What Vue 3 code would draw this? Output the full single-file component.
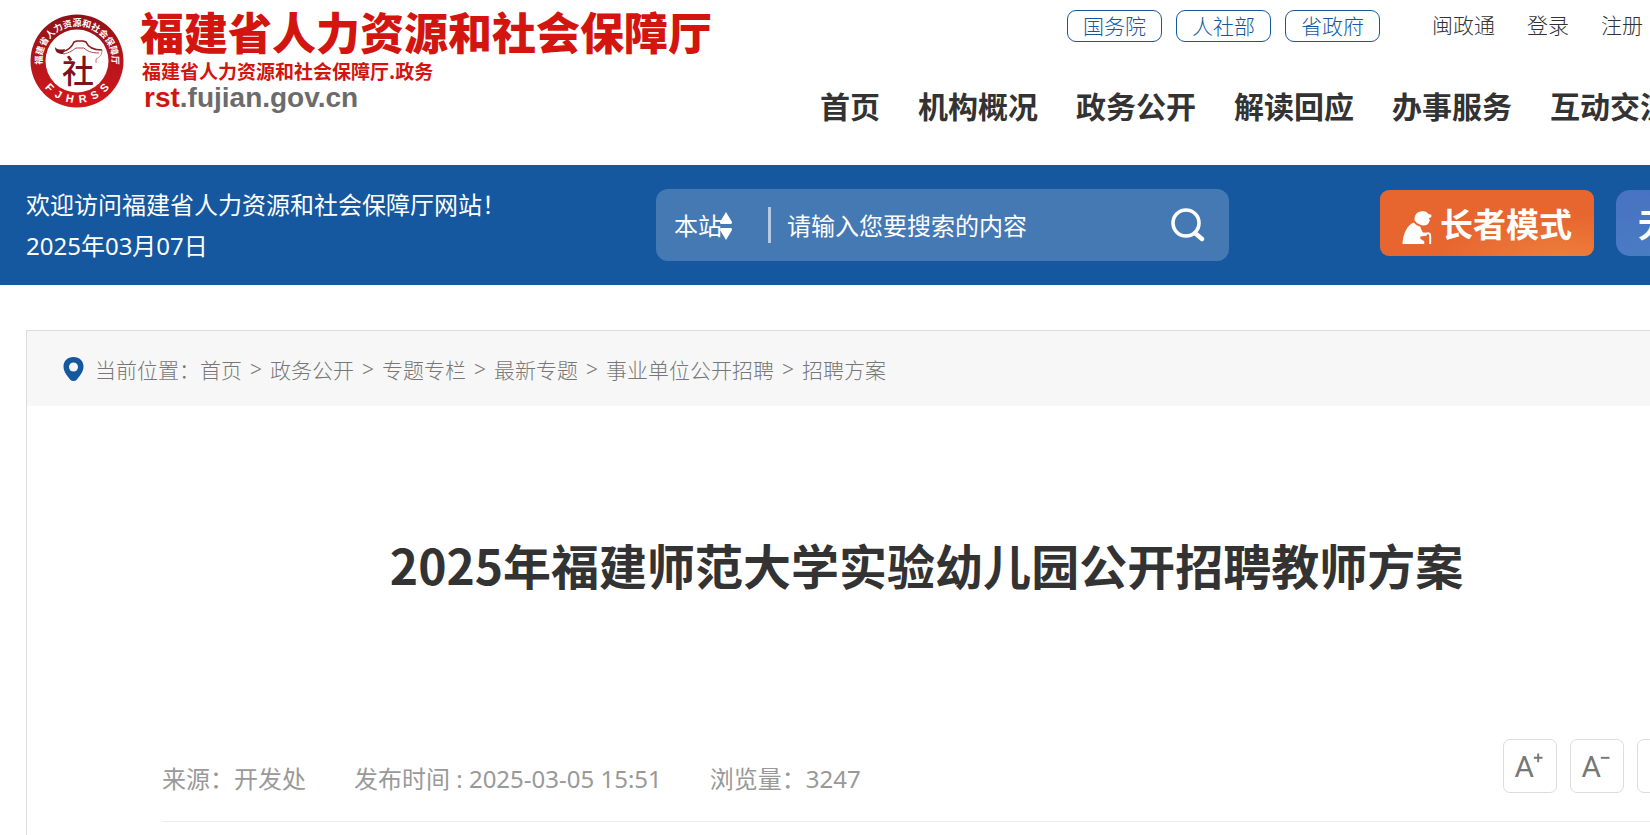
<template>
  <div class="page">
    <header class="header">
      <a href="#" class="brand">
        <svg class="seal" viewBox="0 0 94 94" role="img" aria-label="FJHRSS">
          <defs>
            <linearGradient id="sealRed" x1="0" y1="0" x2="0" y2="1">
              <stop offset="0" stop-color="#8c1218" />
              <stop offset="0.5" stop-color="#b5161b" />
              <stop offset="1" stop-color="#d2181c" />
            </linearGradient>
            <path id="sealTop" d="M12.5 53 A35 35 0 1 1 81.5 53" />
            <path id="sealBottom" d="M5 47 A42 42 0 0 0 89 47" />
          </defs>
          <circle cx="47" cy="47" r="46.5" fill="url(#sealRed)" />
          <circle cx="47" cy="47" r="31.5" fill="#fff" />
          <text class="seal-cn"><textPath href="#sealTop" startOffset="50%">福建省人力资源和社会保障厅</textPath></text>
          <text class="seal-en"><textPath href="#sealBottom" startOffset="50%">F&#160; J&#160; H&#160; R&#160; S&#160; S</textPath></text>
          <path d="M25 33 C27 36 31 36 35 35 L33 40 C28 40 25 38 25 33Z" fill="#7c141b" />
          <path d="M32 38 C39 36 42 33 44 28 L47 27 H53 L56 28 C58 33 63 36 72 36" fill="none" stroke="#8c1a20" stroke-width="1.6" />
          <path d="M33 40 C40 39 43 36 46 34 H54 C57 37 61 39 69 39" fill="none" stroke="#a8474b" stroke-width="1" />
          <path d="M72 36 C72 41 70 43 66 45 V49" fill="none" stroke="#c07478" stroke-width="1" />
          <text class="seal-mark" x="48" y="69">社</text>
        </svg>
        <span class="brand-text">
          <span class="brand-name">福建省人力资源和社会保障厅</span>
          <span class="brand-sub">福建省人力资源和社会保障厅.政务</span>
          <span class="brand-url"><b>rst</b>.fujian.gov.cn</span>
        </span>
      </a>
      <div class="header-right">
        <div class="top-links">
          <a v-for="item in govLinks" :key="item" href="#" class="pill">{{ item }}</a>
          <div class="user-links">
            <a v-for="item in userLinks" :key="item" href="#">{{ item }}</a>
          </div>
        </div>
        <nav class="nav">
          <a v-for="item in navList" :key="item" href="#">{{ item }}</a>
        </nav>
      </div>
    </header>

    <section class="banner">
      <div class="welcome">
        <p>欢迎访问福建省人力资源和社会保障厅网站！</p>
        <p>2025年03月07日</p>
      </div>
      <form class="search" @submit.prevent>
        <div class="scope">
          <select v-model="scope" aria-label="搜索范围">
            <option>本站</option>
          </select>
          <svg class="scope-arrow" viewBox="0 0 12 28">
            <path d="M6 0 L12 10 Q12 12 11 12 H1 Q0 12 0 10Z M6 28 L12 18 Q12 16 11 16 H1 Q0 16 0 18Z" fill="#fff" />
          </svg>
        </div>
        <input v-model="keyword" type="text" placeholder="请输入您要搜索的内容" aria-label="搜索内容" />
        <button type="submit" class="search-btn" aria-label="搜索">
          <svg viewBox="0 0 34 34">
            <circle cx="15" cy="15" r="13" fill="none" stroke="#fff" stroke-width="3.6" />
            <path d="M24 25 L31 31" stroke="#fff" stroke-width="4.4" stroke-linecap="round" />
          </svg>
        </button>
      </form>
      <div class="modes">
        <button type="button" class="mode elder">
          <svg viewBox="0 0 88 100">
            <path d="M0 100 C2 68 14 44 34 35 Q42 46 54 48 Q57 58 62 65 L74 66 L73 75 L54 77 V84 L66 92 V100Z" fill="#fff" />
            <path d="M37 29 C35 12 44 2 60 1 Q72 0 78 8 L88 12 L87 19 L80 21 L83 29 L77 40 Q66 46 54 42 Q42 38 37 29Z" fill="#fff" />
            <path d="M69 71 Q84 62 84 77 V100" fill="none" stroke="#fff" stroke-width="6" />
          </svg>
          长者模式
        </button>
        <button type="button" class="mode barrier">无障碍浏览</button>
      </div>
    </section>

    <main class="card">
      <div class="crumb">
        <svg class="pin" viewBox="0 0 20 24">
          <path d="M10 0 C4 0 0 4 0 9.5 C0 15 4 19 7 23 Q8 24 10 24 Q12 24 13 23 C16 19 20 15 20 9.5 C20 4 16 0 10 0Z" fill="#15589f" />
          <circle cx="10" cy="10" r="4.5" fill="#f7f7f7" />
        </svg>
        <span>当前位置：</span>
        <template v-for="(item, i) in crumbs" :key="item">
          <span v-if="i > 0" class="sep">&gt;</span>
          <a href="#">{{ item }}</a>
        </template>
      </div>
      <article class="article">
        <h1>2025年福建师范大学实验幼儿园公开招聘教师方案</h1>
        <div class="meta">
          <div class="meta-text">
            <span>来源：开发处</span>
            <span>发布时间 : 2025-03-05 15:51</span>
            <span>浏览量：3247</span>
          </div>
          <div class="tools">
            <button type="button" aria-label="放大字体">
              <svg viewBox="0 0 54 54">
                <text x="11" y="38">A</text>
                <path d="M31 18.5 H40 M35.5 14 V23" />
              </svg>
            </button>
            <button type="button" aria-label="缩小字体">
              <svg viewBox="0 0 54 54">
                <text x="11" y="38">A</text>
                <path d="M31 18.5 H40" />
              </svg>
            </button>
            <button type="button" aria-label="默认字体">
              <svg viewBox="0 0 54 54">
                <text x="18" y="38">A</text>
              </svg>
            </button>
          </div>
        </div>
      </article>
    </main>
  </div>
</template>

<script setup>
import { ref } from 'vue'

const scope = ref('本站')
const keyword = ref('')

const govLinks = ['国务院', '人社部', '省政府']
const userLinks = ['闽政通', '登录', '注册']
const navList = ['首页', '机构概况', '政务公开', '解读回应', '办事服务', '互动交流']
const crumbs = ['首页', '政务公开', '专题专栏', '最新专题', '事业单位公开招聘', '招聘方案']
</script>

<style>
html,
body {
  overflow-x: hidden;
}
</style>

<style scoped>
.page {
  display: flex;
  flex-direction: column;
  min-width: 1853px;
  min-height: 100vh;
  box-sizing: border-box;
  background: #fff;
  color: #333;
  font-family: "Noto Sans", "Noto Sans CJK SC", sans-serif;
}
a {
  color: inherit;
  text-decoration: none;
}
button,
input,
select {
  font-family: inherit;
  color: inherit;
  border: 0;
  padding: 0;
  background: none;
}

/* header */
.header {
  display: flex;
  height: 165px;
  padding: 0 26px;
}
.brand {
  display: flex;
  flex: 0 0 794px;
  box-sizing: border-box;
  padding: 4px 0 0 4px;
  color: #d2150f;
}
.seal {
  width: 94px;
  height: 94px;
  margin-top: 10px;
}
.seal-cn {
  font-family: "Noto Sans CJK SC", sans-serif;
  font-size: 9px;
  font-weight: 700;
  fill: #fff;
  text-anchor: middle;
}
.seal-en {
  font-family: "Liberation Sans", sans-serif;
  font-size: 11px;
  font-weight: 700;
  fill: #fff;
  text-anchor: middle;
}
.seal-mark {
  font-family: "Noto Sans CJK SC", sans-serif;
  font-size: 32px;
  font-weight: 500;
  fill: #7c141b;
  text-anchor: middle;
}
.brand-text {
  display: flex;
  flex-direction: column;
  margin-left: 16px;
  white-space: nowrap;
}
.brand-name {
  font-family: "Noto Sans CJK SC", sans-serif;
  font-size: 44px;
  font-weight: 900;
  line-height: 54px;
}
.brand-sub {
  padding-left: 2px;
  font-family: "Noto Sans CJK SC", sans-serif;
  font-size: 19px;
  font-weight: 700;
  line-height: 26px;
}
.brand-url {
  padding-left: 4px;
  font-family: "Liberation Sans", sans-serif;
  font-size: 28px;
  font-weight: 700;
  line-height: 28px;
  color: #6b6b6b;
}
.brand-url b {
  color: #d2150f;
}
.top-links {
  display: flex;
  gap: 14px;
  padding: 10px 0 0 247px;
  font-size: 21px;
  font-weight: 300;
  line-height: 30px;
}
.pill {
  padding: 0 15px;
  border: 1px solid #15589f;
  border-radius: 9px;
  color: #15589f;
}
.user-links {
  display: flex;
  gap: 32px;
  margin-left: 38px;
}
.nav {
  display: flex;
  gap: 38px;
  margin-top: 44px;
  font-size: 30px;
  font-weight: 700;
  line-height: 42px;
  white-space: nowrap;
}

/* banner */
.banner {
  display: flex;
  align-items: center;
  height: 120px;
  padding: 0 28px 0 26px;
  background: #15589f;
  color: #fff;
}
.welcome {
  flex: 0 0 630px;
  font-size: 24px;
  line-height: 41px;
}
.welcome p {
  margin: 0;
}
.search {
  display: flex;
  align-items: center;
  width: 573px;
  height: 72px;
  border-radius: 12px;
  background: #4579b4;
  font-size: 24px;
}
.scope {
  position: relative;
  width: 94px;
  margin-left: 18px;
  border-right: 3px solid #b5c9e1;
}
.scope select {
  display: block;
  width: 100%;
  height: 36px;
  appearance: none;
  font-size: 24px;
}
.scope option {
  color: #333;
}
.scope-arrow {
  position: absolute;
  top: 5px;
  left: 46px;
  width: 12px;
  height: 28px;
  pointer-events: none;
}
.search input {
  flex: 1;
  min-width: 0;
  height: 40px;
  margin-left: 16px;
  outline: none;
  font-size: 24px;
}
.search input::placeholder {
  color: #fff;
  opacity: 1;
}
.search-btn {
  width: 34px;
  height: 34px;
  margin-right: 24px;
}
.search-btn svg {
  display: block;
}
.modes {
  display: flex;
  gap: 22px;
  margin: 0 0 4px auto;
}
.mode {
  display: flex;
  align-items: center;
  height: 66px;
  padding: 0 22px;
  font-size: 33px;
  font-weight: 700;
  white-space: nowrap;
}
.elder {
  gap: 8px;
  border-radius: 9px;
  background: radial-gradient(ellipse 60% 70% at 85% 105%, #ec7f3c, #e7652f);
}
.elder svg {
  width: 30px;
  height: 33px;
  margin-top: 8px;
}
.barrier {
  border-radius: 14px;
  background: linear-gradient(170deg, #4872c2, #4a80c4);
}

/* content */
.card {
  flex: 1;
  margin: 45px 26px 0;
  border: 1px solid #dcdcdc;
  border-bottom: 0;
}
.crumb {
  display: flex;
  align-items: center;
  height: 75px;
  padding-left: 36px;
  background: #f7f7f7;
  color: #777;
  font-size: 21px;
  font-weight: 300;
}
.pin {
  width: 21px;
  height: 24px;
  margin-right: 11px;
}
.sep {
  margin: 0 8px;
}
.article {
  padding: 0 135px;
}
h1 {
  margin: 122px 0 0;
  font-family: "Noto Sans CJK SC", sans-serif;
  font-size: 48px;
  font-weight: 700;
  line-height: 72px;
  text-align: center;
}
.meta {
  display: flex;
  justify-content: space-between;
  height: 82px;
  margin-top: 139px;
  border-bottom: 1px solid #eaeaea;
}
.meta-text {
  display: flex;
  gap: 48px;
  padding-top: 22px;
  color: #999;
  font-size: 24px;
  line-height: 36px;
}
.tools {
  display: flex;
  gap: 13px;
}
.tools button {
  width: 54px;
  height: 54px;
  box-sizing: border-box;
  border: 1px solid #ddd;
  border-radius: 7px;
}
.tools svg {
  display: block;
  width: 100%;
}
.tools text {
  font-family: Roboto, sans-serif;
  font-size: 31px;
  font-weight: 400;
  fill: #777;
}
.tools path {
  stroke: #777;
  stroke-width: 2;
}
</style>
